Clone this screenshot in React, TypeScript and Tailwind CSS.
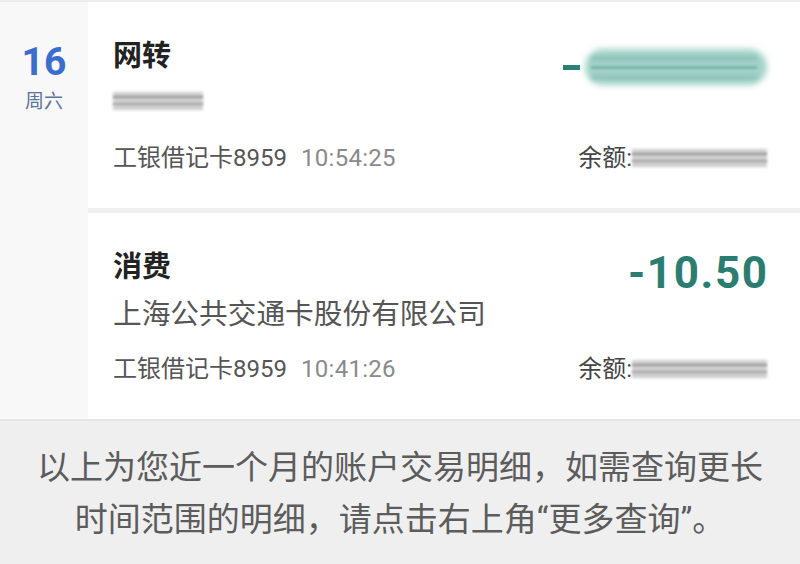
import React from "react";

const font = "font-['Roboto','Noto_Sans_CJK_SC',sans-serif]";

interface Txn {
    title: string;
    sub?: string;
    amount?: string;
    card: string;
    time: string;
}

const txns: Txn[] = [
    { title: "网转", card: "工银借记卡8959", time: "10:54:25" },
    {
        title: "消费",
        sub: "上海公共交通卡股份有限公司",
        amount: "-10.50",
        card: "工银借记卡8959",
        time: "10:41:26",
    },
];

function BlurGray({ w }: { w: number }) {
    return (
        <div className="relative h-[22px]" style={{ width: w }}>
            <div className="absolute inset-x-0 top-[2px] h-[18px] bg-[#cdcdcd] blur-[1.5px]" />
            <div className="absolute inset-x-0 top-[6px] h-[2px] bg-[#9a9a9a] blur-[1px]" />
            <div className="absolute inset-x-0 top-[13px] h-[2px] bg-[#a8a8a8] blur-[1px]" />
        </div>
    );
}

function TxnCard({ t }: { t: Txn }) {
    return (
        <div className="bg-white h-[206px] pl-[25px] pr-[33px] flex flex-col">
            {/* title + amount */}
            <div className="mt-[36px] h-[36px] flex items-center justify-between">
                <span className="text-[29px] leading-[36px] font-bold text-[#222]">
                    {t.title}
                </span>
                {t.amount ? (
                    <span className="text-[44px] leading-[36px] font-bold text-[#2c7d71] mt-[12px] tracking-[1.6px] mr-[-1.6px]">
                        {t.amount}
                    </span>
                ) : (
                    <div className="flex items-center gap-[5px] mt-[22px]">
                        <div className="w-[17px] h-[5px] bg-[#2d7f73]" />
                        <div className="relative w-[182px] h-[36px]">
                            <div className="absolute inset-0 rounded-full bg-[#a2d2c8] blur-[3px]" />
                            <div className="absolute left-[6px] right-[10px] top-[8px] h-[3px] bg-[#85bcb2] blur-[2px]" />
                            <div className="absolute left-[6px] right-[10px] top-[17px] h-[3px] bg-[#7ab4a9] blur-[1px]" />
                            <div className="absolute left-[6px] right-[10px] top-[27px] h-[3px] bg-[#85bcb2] blur-[2px]" />
                        </div>
                    </div>
                )}
            </div>

            {/* sub line */}
            <div className="mt-[11px] h-[36px] flex items-center">
                {t.sub ? (
                    <span className="text-[28.7px] leading-[36px] text-[#555]">{t.sub}</span>
                ) : (
                    <div className="mt-[-4px]">
                        <BlurGray w={90} />
                    </div>
                )}
            </div>

            {/* card + balance */}
            <div className="mt-[21px] h-[32px] flex items-center justify-between">
                <div className="flex items-center text-[24px] leading-[32px]">
                    <span className="text-[#555]">{t.card}</span>
                    <span className="text-[#8a8a8a] ml-[14px] tracking-[0.3px]">{t.time}</span>
                </div>
                <div className="flex items-center">
                    <span className="text-[24px] leading-[32px] text-[#444]">余额:</span>
                    <BlurGray w={135} />
                </div>
            </div>
        </div>
    );
}

export default function App() {
    return (
        <div className={`w-[800px] h-[564px] overflow-hidden bg-[#efefef] flex flex-col ${font}`}>
            <div className="h-[2px] bg-[#ececec]" />
            <div className="flex">
                {/* date column */}
                <div className="w-[88px] bg-[#f8f8f8] flex flex-col items-center pt-[38px]">
                    <span className="text-[39px] leading-[44px] font-bold text-[#3b6dcf]">16</span>
                    <span className="text-[19px] leading-[24px] text-[#5b7399] mt-[6px]">周六</span>
                </div>

                <div className="flex-1 flex flex-col">
                    <TxnCard t={txns[0]} />
                    <div className="h-[5px] bg-[#f0f0f0]" />
                    <TxnCard t={txns[1]} />
                </div>
            </div>
            <div className="h-[2px] bg-[#e6e6e6]" />

            <div className="pt-[21px] text-center text-[33px] leading-[52px] text-[#5c5c5c] whitespace-nowrap">
                以上为您近一个月的账户交易明细，如需查询更长
                <br />
                时间范围的明细，请点击右上角“更多查询”。
            </div>
        </div>
    );
}
